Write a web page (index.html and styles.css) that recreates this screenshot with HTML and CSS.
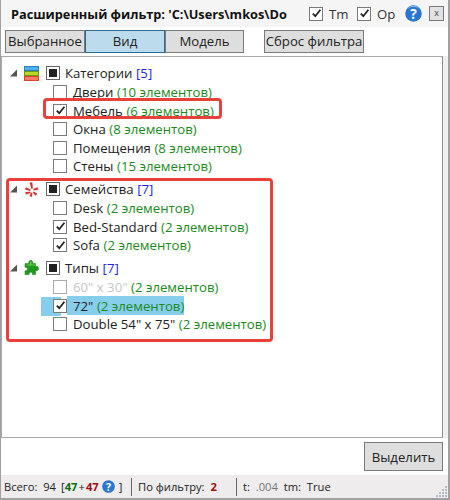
FILE: index.html
```html
<!DOCTYPE html>
<html lang="ru">
<head>
<meta charset="utf-8">
<title>Расширенный фильтр</title>
<link rel="stylesheet" href="styles.css">
</head>
<body>
<div class="window">
  <header class="titlebar">
    <div class="title">Расширенный фильтр: 'C:\Users\mkos\Do</div>
    <label class="top-check"><span class="cb checked"><svg viewBox="0 0 11 11"><path d="M1.8 5.6 4.3 8.2 9.4 1.8" /></svg></span>Tm</label>
    <label class="top-check"><span class="cb checked"><svg viewBox="0 0 11 11"><path d="M1.8 5.6 4.3 8.2 9.4 1.8" /></svg></span>Op</label>
    <svg class="help" viewBox="0 0 16 16"><circle cx="8" cy="8" r="7.8" fill="#2a76d2"/><path d="M2 4a7 7 0 0 1 12 0 9 9 0 0 0-12 0z" fill="#8fc0f0"/><text x="8" y="13" text-anchor="middle" class="help-q">?</text></svg>
    <div class="close">x</div>
  </header>
  <nav class="toolbar">
    <div class="tabs">
      <button class="tab first">Выбранное</button>
      <button class="tab active">Вид</button>
      <button class="tab model">Модель</button>
    </div>
    <button class="tab reset">Сброс фильтра</button>
  </nav>
  <main class="tree">
    <section class="group">
      <div class="row parent">
        <span class="arrow"></span>
        <svg class="icon" viewBox="0 0 15 15"><rect x=".5" y=".5" width="14" height="4" fill="#4fb2e8" stroke="#2b7fc0"/><rect x=".5" y="5.5" width="14" height="4" fill="#bdd62a" stroke="#6f9a10"/><rect x=".5" y="10.5" width="14" height="4" fill="#f47c62" stroke="#d8442c"/></svg>
        <span class="cb mixed"><i></i></span>
        <span class="name">Категории</span> <span class="count">[5]</span>
      </div>
      <div class="row child"><span class="cb"></span><span class="name">Двери</span> <span class="el">(10 элементов)</span></div>
      <div class="row child"><span class="cb checked"><svg viewBox="0 0 11 11"><path d="M1.8 5.6 4.3 8.2 9.4 1.8" /></svg></span><span class="name">Мебель</span> <span class="el">(6 элементов)</span></div>
      <div class="row child"><span class="cb"></span><span class="name">Окна</span> <span class="el">(8 элементов)</span></div>
      <div class="row child"><span class="cb"></span><span class="name">Помещения</span> <span class="el">(8 элементов)</span></div>
      <div class="row child"><span class="cb"></span><span class="name">Стены</span> <span class="el">(15 элементов)</span></div>
      <div class="mark mark-one"></div>
    </section>
    <section class="group">
      <div class="row parent">
        <span class="arrow"></span>
        <svg class="icon" viewBox="0 0 15 15" fill="#d8302f"><path d="M5.6.6 8.3.2l.6 6.3-1.4.5z"/><path d="M1 7.6l1-2.4 4.6 2.4-.4 1.4z"/><path d="M13.6 5.2l.9 2.3-4.6 1-.7-1.4z"/><path d="M1.8 12.6l-.6-2.3 5-.8.6 1.4z"/><path d="M7 10.6l1.4.5-.3 3.7-2.6-.4z"/><path d="M9.6 9.6l3.8 2.2-1.6 2-3-3z"/></svg>
        <span class="cb mixed"><i></i></span>
        <span class="name">Семейства</span> <span class="count">[7]</span>
      </div>
      <div class="row child"><span class="cb"></span><span class="name">Desk</span> <span class="el">(2 элементов)</span></div>
      <div class="row child"><span class="cb checked"><svg viewBox="0 0 11 11"><path d="M1.8 5.6 4.3 8.2 9.4 1.8" /></svg></span><span class="name">Bed-Standard</span> <span class="el">(2 элементов)</span></div>
      <div class="row child"><span class="cb checked"><svg viewBox="0 0 11 11"><path d="M1.8 5.6 4.3 8.2 9.4 1.8" /></svg></span><span class="name">Sofa</span> <span class="el">(2 элементов)</span></div>
    </section>
    <section class="group">
      <div class="row parent">
        <span class="arrow"></span>
        <svg class="icon puzzle" viewBox="0 0 16 16"><path d="M6 3.6C5.4 1.8 6 .4 7.8.4s2.400 1.400 1.800 3.200h3v3.200c1.400-.6 3-.2 3 1.800s-1.600 2.400-3 1.800v4.200H9.400c.4-1.400-.2-2.400-1.600-2.400s-2 1-1.600 2.400H2v-3.800C3.200 11 4.400 10.400 4.400 9S3.200 7 2 7.400V3.600z" fill="#1f9a1f" stroke="#177a17" stroke-width=".5"/><path d="M7 2c.8-.6 1.500-.2 1.500.8L8.300 4.600H12v1H3.500V4.600H7z" fill="#6ed34a"/></svg>
        <span class="cb mixed"><i></i></span>
        <span class="name">Типы</span> <span class="count">[7]</span>
      </div>
      <div class="row child"><span class="cb dim"></span><span class="name dimmed">60" x 30"</span> <span class="el">(2 элементов)</span></div>
      <div class="row child selected"><span class="cb checked"><svg viewBox="0 0 11 11"><path d="M1.8 5.6 4.3 8.2 9.4 1.8" /></svg></span><span class="sel"><span class="name">72"</span> <span class="el">(2 элементов)</span></span></div>
      <div class="row child"><span class="cb"></span><span class="name">Double 54" x 75"</span> <span class="el">(2 элементов)</span></div>
    </section>
    <div class="mark mark-two"></div>
  </main>
  <div class="actions"><button class="select-btn">Выделить</button></div>
  <footer class="status">
    <span class="s-total">Всего:&nbsp; 94</span>
    <span class="s-br">[<b class="green">47</b><span class="plus">+</span><b class="red">47</b><svg class="help-small" viewBox="0 0 16 16"><circle cx="8" cy="8" r="7.8" fill="#2a76d2"/><text x="8" y="13" text-anchor="middle" class="help-q">?</text></svg>]</span>
    <span class="sep"></span>
    <span class="s-filter">По фильтру:&nbsp; <b class="red">2</b></span>
    <span class="sep"></span>
    <span class="t">t:&nbsp; <span class="muted">.004</span>&nbsp; tm:&nbsp; True</span>
    <svg class="grip" viewBox="0 0 12 12"><g fill="#b4bcc6"><rect x="9" y="0" width="2" height="2"/><rect x="9" y="3" width="2" height="2"/><rect x="6" y="3" width="2" height="2"/><rect x="9" y="6" width="2" height="2"/><rect x="6" y="6" width="2" height="2"/><rect x="3" y="6" width="2" height="2"/><rect x="9" y="9" width="2" height="2"/><rect x="6" y="9" width="2" height="2"/><rect x="3" y="9" width="2" height="2"/><rect x="0" y="9" width="2" height="2"/></g></svg>
  </footer>
</div>
</body>
</html>
```
FILE: styles.css
```css
* { box-sizing: border-box; }
html, body { margin: 0; padding: 0; }
body { width: 450px; height: 500px; background: #fff; font-family: "Open Sans", "Noto Sans", sans-serif; font-size: 13.2px; color: #1a1a1a; overflow: hidden; }
.window { width: 450px; height: 500px; border: 1px solid #a0a0a0; border-width: 0 2px 2px 1px; display: flex; flex-direction: column; background: #fff; }
.titlebar { height: 27px; display: flex; align-items: center; background: #f5f5f5; padding-left: 10px; flex: none; }
.title { width: 298px; font-weight: 700; font-size: 12.75px; white-space: nowrap; overflow: hidden; color: #111; }
.top-check { display: flex; align-items: center; gap: 6px; width: 48px; color: #333; font-size: 13.2px; }
.top-check .cb { margin-right: 0; }
.help { width: 17px; height: 17px; }
.help-q { fill: #fff; font: 700 13px "Open Sans", sans-serif; }
.close { width: 15px; height: 15px; margin-left: 7px; border: 1px solid #7a7a7a; background: #e2e2e2; font-size: 9px; line-height: 12px; text-align: center; color: #444; }
.toolbar { height: 27px; flex: none; display: flex; padding: 3px 0 0 4px; }
.tabs { display: flex; width: 259px; }
.tab { height: 23px; background: #dedede; border: 1px solid #7a7a7a; font: 13.2px/19px "Open Sans", sans-serif; color: #222; padding: 0; margin: 0; }
.tab.first { width: 80px; }
.tab.active { width: 80px; background: #bcdcee; border: 1px solid #2b6a95; }
.tab.model { width: 79px; }
.tab.reset { width: 100px; white-space: nowrap; }
.tree { position: relative; margin: 2px 0 0 0; width: 442px; height: 382px; flex: none; border: 1px solid #a9a9a9; border-right-color: #8e8e8e; padding: 6px 0 0 0; box-shadow: 5px 0 0 #f0f0f0; }
.group { position: relative; }
.group + .group { margin-top: 3.5px; }
.row { display: flex; align-items: center; height: 18.5px; white-space: pre; color: #222; line-height: 18px; }
.row .name { margin-right: 3.6px; }
.parent { padding-left: 8px; height: 20px; }
.parent .cb { margin-right: 5px; }
.child { padding-left: 51px; }
.arrow { width: 7px; height: 7px; margin-right: 7px; background: #555; clip-path: polygon(100% 0, 100% 100%, 0 100%); }
.icon { width: 15px; height: 15px; margin-right: 7px; }
.icon.puzzle { width: 16px; height: 16px; margin: 0 7px 0 -1px; }
.cb { flex: none; width: 14px; height: 14px; border: 1px solid #7b7b7b; background: #fff; display: inline-flex; align-items: center; justify-content: center; margin-right: 6px; }
.cb svg { width: 11px; height: 11px; fill: none; stroke: #222; stroke-width: 1.8; }
.cb.mixed { border-width: 1.5px; border-color: #666; }
.cb.mixed i { display: block; width: 8px; height: 8px; background: #222; }
.cb.dim { border-color: #aaa; }
.count { color: #1f1fe0; }
.el { color: #1b8a1b; }
.dimmed { color: #c6c6c6; }
.sel { display: inline-flex; height: 19px; align-items: center; background: #87cdec; padding-left: 6px; }
.selected { position: relative; z-index: 0; }
.selected::before { content: ""; position: absolute; left: 39px; width: 20px; top: 0; height: 19px; background: #87cdec; z-index: -1; }
.selected .cb { margin-right: 0; }
.mark { position: absolute; border: 3px solid #e8413a; border-radius: 4px; pointer-events: none; }
.mark-one { left: 41px; top: 35px; width: 179px; height: 21px; }
.mark-two { left: 4px; top: 121px; width: 267px; height: 164px; }
.actions { flex: 1; display: flex; justify-content: flex-end; padding: 4px 5px 0 0; }
.select-btn { width: 79px; height: 29px; background: #dedede; border: 1px solid #7a7a7a; font: 13.2px "Open Sans", sans-serif; color: #222; padding: 0; }
.status { height: 23px; flex: none; display: flex; align-items: center; background: #eeecec; padding-left: 3px; position: relative; font-size: 11.2px; color: #222; }
.s-total { width: 57px; }
.s-br { display: inline-flex; align-items: center; width: 70px; }
.green { color: #0f6e0f; }
.red { color: #9c0f0f; }
.plus { margin: 0 1px; }
.help-small { width: 13px; height: 13px; margin: 0 4px 0 3px; }
.sep { flex: none; width: 1px; height: 18px; background: #666; margin: 0 6px 0 0; }
.s-filter { width: 98px; white-space: nowrap; }
.muted { color: #777; }
.grip { position: absolute; right: 0; bottom: 0; width: 12px; height: 12px; }
```
